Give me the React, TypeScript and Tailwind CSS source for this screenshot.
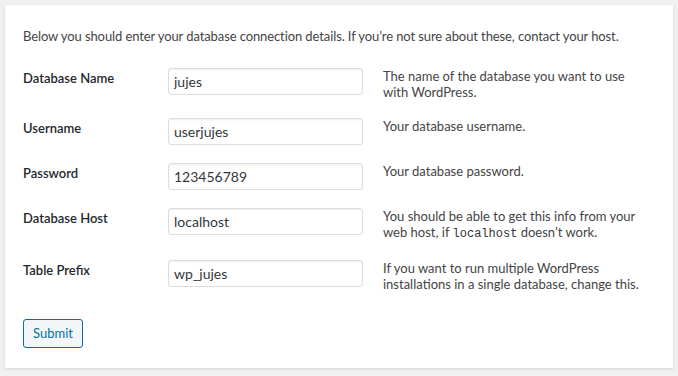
const rows: { label: string; value: string; desc: React.ReactNode }[] = [
  {
    label: "Database Name",
    value: "jujes",
    desc: "The name of the database you want to use with WordPress.",
  },
  { label: "Username", value: "userjujes", desc: "Your database username." },
  { label: "Password", value: "123456789", desc: "Your database password." },
  {
    label: "Database Host",
    value: "localhost",
    desc: (
      <>
        You should be able to get this info from your web host, if{" "}
        <code className="font-['Liberation_Mono',monospace] text-[12px] text-[#333]">localhost</code> doesn’t work.
      </>
    ),
  },
  {
    label: "Table Prefix",
    value: "wp_jujes",
    desc: "If you want to run multiple WordPress installations in a single database, change this.",
  },
];

export default function App() {
  return (
    <div className="w-[678px] h-[376px] bg-[#f1f1f1] p-[5px] font-['Lato',sans-serif] text-[13px] text-[#444]">
      <div className="bg-white h-[363px] shadow-[0_1px_3px_rgba(0,0,0,0.13)] px-[18px] pt-[22px]">
        <p className="leading-[19px] tracking-[-0.1px]">
          Below you should enter your database connection details. If you’re not sure about these, contact your host.
        </p>
        <div className="mt-[13px] flex flex-col">
          {rows.map((r) => (
            <div key={r.label} className="flex py-[9px]">
              <div className="w-[145px] shrink-0 pt-[2px] leading-[16px] font-semibold text-[#23282d]">
                {r.label}
              </div>
              <div className="w-[215px] shrink-0">
                <input
                  readOnly
                  value={r.value}
                  className="block w-[195px] h-[27px] border border-[#ddd] rounded-[3px] bg-white px-[5px] text-[14px] text-[#32373c] shadow-[inset_0_1px_2px_rgba(0,0,0,0.07)] outline-none"
                />
              </div>
              <div className="w-[262px] leading-[16px]">{r.desc}</div>
            </div>
          ))}
        </div>
        <button className="mt-[18px] w-[60px] h-[29px] border border-[#0071a1] rounded-[3px] bg-[#f3f5f6] text-[#0071a1] text-[13px] leading-none">
          Submit
        </button>
      </div>
    </div>
  );
}
